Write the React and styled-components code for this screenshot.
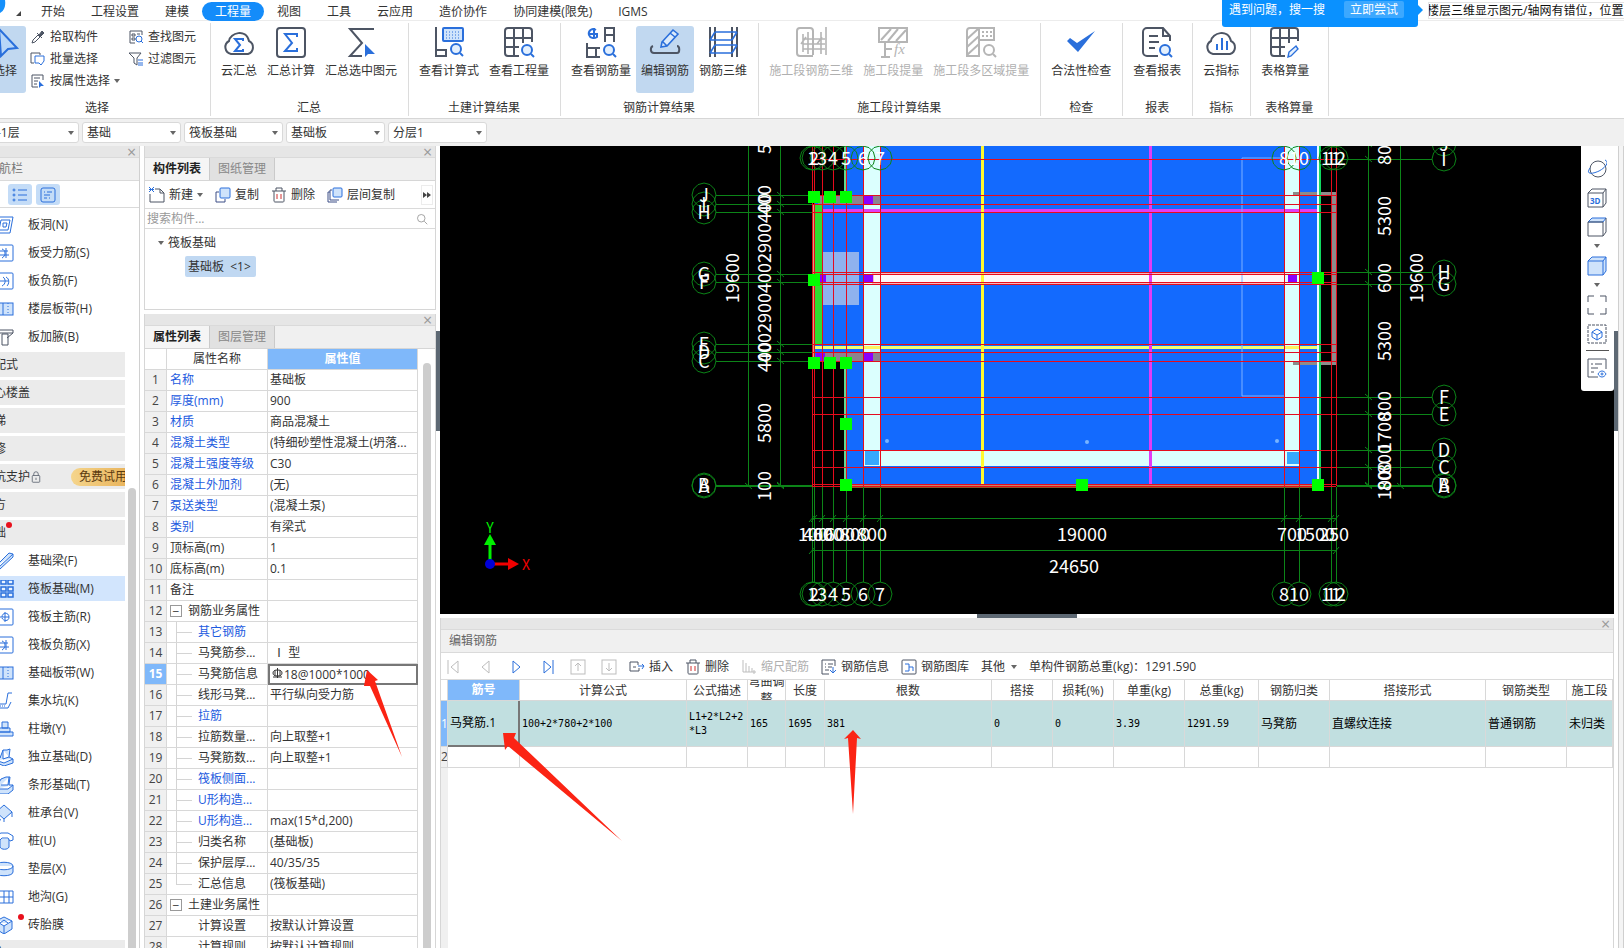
import React from 'react';
import styled, { createGlobalStyle, css } from 'styled-components';

const INK = '#4d5564';
const BLUE = '#2a6fdb';
const PALE = '#cfe3fb';

/* ---------- data ---------- */

const menus = ['开始', '工程设置', '建模', '工程量', '视图', '工具', '云应用', '造价协作', '协同建模(限免)', 'IGMS'];

const groups = [
  { title: '汇总', items: [['cloudSum', '云汇总'], ['sum', '汇总计算'], ['sumPick', '汇总选中图元']] },
  { title: '土建计算结果', items: [['formula', '查看计算式'], ['gridSearch', '查看工程量']] },
  { title: '钢筋计算结果', items: [['rebarSearch', '查看钢筋量'], ['rebarEdit', '编辑钢筋', true], ['rebar3d', '钢筋三维']] },
  { title: '施工段计算结果', disabled: true, items: [['zone3d', '施工段钢筋三维'], ['zoneFx', '施工段提量'], ['zoneMulti', '施工段多区域提量']] },
  { title: '检查', items: [['check', '合法性检查']] },
  { title: '报表', items: [['report', '查看报表']] },
  { title: '指标', items: [['cloudBars', '云指标']] },
  { title: '表格算量', wide: true, items: [['gridEdit', '表格算量']] },
];

const filters = [['楼层', '第-1层'], ['类别', '基础'], ['构件类型', '筏板基础'], ['构件', '基础板'], ['分层', '分层1']];

const navRows = [
  { icon: 'hole', text: '板洞(N)' },
  { icon: 'bars', text: '板受力筋(S)' },
  { icon: 'bars2', text: '板负筋(F)' },
  { icon: 'strip', text: '楼层板带(H)' },
  { icon: 'haunch', text: '板加腋(B)' },
  { head: true, text: '装配式' },
  { head: true, text: '空心楼盖' },
  { head: true, text: '楼梯' },
  { head: true, text: '装修' },
  { head: true, text: '基坑支护', trial: true },
  { head: true, text: '土方' },
  { head: true, text: '基础', dot: true },
  { icon: 'beam', text: '基础梁(F)' },
  { icon: 'raft', text: '筏板基础(M)', active: true },
  { icon: 'mainBar', text: '筏板主筋(R)' },
  { icon: 'bars', text: '筏板负筋(X)' },
  { icon: 'strip', text: '基础板带(W)' },
  { icon: 'sump', text: '集水坑(K)' },
  { icon: 'pier', text: '柱墩(Y)' },
  { icon: 'pad', text: '独立基础(D)' },
  { icon: 'padStrip', text: '条形基础(T)' },
  { icon: 'cap', text: '桩承台(V)' },
  { icon: 'pile', text: '桩(U)' },
  { icon: 'cushion', text: '垫层(X)' },
  { icon: 'trench', text: '地沟(G)' },
  { icon: 'brick', text: '砖胎膜', dot: true },
  { head: true, text: '其它' },
];

const props = [
  ['名称', '基础板', 'link'],
  ['厚度(mm)', '900', 'link'],
  ['材质', '商品混凝土', 'link'],
  ['混凝土类型', '(特细砂塑性混凝土(坍落...', 'link'],
  ['混凝土强度等级', 'C30', 'link'],
  ['混凝土外加剂', '(无)', 'link'],
  ['泵送类型', '(混凝土泵)', 'link'],
  ['类别', '有梁式', 'link'],
  ['顶标高(m)', '1', ''],
  ['底标高(m)', '0.1', ''],
  ['备注', '', ''],
  ['钢筋业务属性', '', 'group'],
  ['其它钢筋', '', 'child link'],
  ['马凳筋参...', '\u00a0Ⅰ 型', 'child'],
  ['马凳筋信息', '18@1000*1000', 'child edit'],
  ['线形马凳...', '平行纵向受力筋', 'child'],
  ['拉筋', '', 'child link'],
  ['拉筋数量...', '向上取整+1', 'child'],
  ['马凳筋数...', '向上取整+1', 'child'],
  ['筏板侧面...', '', 'child link'],
  ['U形构造...', '', 'child link'],
  ['U形构造...', 'max(15*d,200)', 'child link'],
  ['归类名称', '(基础板)', 'child'],
  ['保护层厚...', '40/35/35', 'child'],
  ['汇总信息', '(筏板基础)', 'child last'],
  ['土建业务属性', '', 'group'],
  ['计算设置', '按默认计算设置', 'child bare'],
  ['计算规则', '按默认计算规则', 'child bare'],
];

const rebarCols = [
  ['筋号', 72, '马凳筋.1'],
  ['计算公式', 167, '100+2*780+2*100'],
  ['公式描述', 61, 'L1+2*L2+2*L3'],
  ['弯曲调整', 38, '165'],
  ['长度', 39, '1695'],
  ['根数', 167, '381'],
  ['搭接', 61, '0'],
  ['损耗(%)', 61, '0'],
  ['单重(kg)', 71, '3.39'],
  ['总重(kg)', 74, '1291.59'],
  ['钢筋归类', 71, '马凳筋'],
  ['搭接形式', 156, '直螺纹连接'],
  ['钢筋类型', 81, '普通钢筋'],
  ['施工段', 0, '未归类'],
];

/* ---------- icons ---------- */

const lens = (x, y, r = 5, c = BLUE) => (
  <g stroke={c}><circle cx={x} cy={y} r={r} fill="#e4f0fd" /><path d={`M${x + r - 1} ${y + r - 1}l3 3`} /></g>
);
const cloud = 'M8 28a7 7 0 0 1-2-13c1-8 17-13 20 0a7 7 0 0 1-1 13z';

const ribbonIcons = {
  cloudSum: <><path d={cloud} /><path d="M20 15v-2h-8l5 6-5 6h8v-2" stroke={BLUE} /></>,
  sum: <><rect x="2" y="2" width="28" height="29" rx="3" /><path d="M22 11V8H10l7 9-7 8h12v-3" stroke={BLUE} /></>,
  sumPick: <><path d="M29 3H5l12 14L5 30h12" /><path d="M20 18v13l3-3h7z" fill={BLUE} stroke="none" /></>,
  formula: <><path d="M3 1v29h10v-6H3" /><rect x="10" y="2" width="20" height="13" rx="1" stroke={BLUE} fill={PALE} /><path d="M13 6h14M13 9h14M13 12h14" stroke={BLUE} strokeDasharray="1 2" strokeWidth="1" />{lens(23, 23)}</>,
  gridSearch: <><path d="M16 30H5a3 3 0 0 1-3-3V5a3 3 0 0 1 3-3h21a3 3 0 0 1 3 3v11M2 12h27M2 21h14M11 2v28M20 2v15" />{lens(24, 24)}</>,
  rebarSearch: <><path d="M20 16V2h9v14M20 9h9M2 17v14h13M2 22h13M11 22v9" /><path d="M11 4C6 1 3 6 4 9s5 4 8 2V8H3M9 2v10" stroke={BLUE} />{lens(24, 24)}</>,
  rebarEdit: <><path d="M4 20c-3 1-3 7 1 7h23c3 0 3-7 0-7" /><path d="M13 16l11-12 5 4-11 12-6 1zM21 7l5 4M14 16l4 4" stroke={BLUE} fill="#dcebfb" strokeWidth="1.6" /></>,
  rebar3d: <><path d="M3 1v30M8 1v30M25 1v30M30 1v30" /><path d="M8 6h22M3 14h22M8 19h22M3 27h22M3 14l5-8M25 14l5-8M3 27l5-8M25 27l5-8" stroke={BLUE} strokeWidth="1.6" /></>,
  zone3d: <><path d="M18 30H5a3 3 0 0 1-3-3V5a3 3 0 0 1 3-3h10a3 3 0 0 1 3 3v24" /><path d="M8 8v18M13 6v22M26 6v22M31 1v28M8 13h22M8 23h22M8 18h22M6 18l5-7M22 18l5-7" strokeWidth="1.6" /></>,
  zoneFx: <><path d="M2 2h28v14H2zM4 14L14 3M11 15L21 3M19 15L29 4M8 16v15M4 31h9M8 23h7" /><text x="17" y="28" stroke="none" fill="#b5b5b5" fontFamily="Liberation Serif, serif" fontStyle="italic" fontSize="15">fx</text></>,
  zoneMulti: <><path d="M29 15V2H5a3 3 0 0 0-3 3v25h12V2M14 14h15M2 13l11-10M2 21l12-11M2 29l12-11" /><path d="M17 6h10M17 10h10" strokeDasharray="2 2" />{lens(24, 24, 5, '#b5b5b5')}</>,
  check: <path d="M2 15l3-3 7 5L30 5 13 26z" fill={BLUE} stroke="none" />,
  report: <><path d="M17 30H6a4 4 0 0 1-4-4V6a4 4 0 0 1 4-4h16l7 8v5M22 2v8h7M8 10h9M8 16h10M8 22h6" />{lens(24, 24)}</>,
  cloudBars: <><path d={cloud} /><path d="M12 24v-6M17 24V12M22 24v-9" stroke={BLUE} /></>,
  gridEdit: <><path d="M16 30H5a3 3 0 0 1-3-3V5a3 3 0 0 1 3-3h21a3 3 0 0 1 3 3v10M2 12h27M2 21h14M11 2v28M20 2v15" /><path d="M19 31l1-5 7-6 2 3-7 7z" stroke={BLUE} strokeWidth="1.4" fill="#e4f0fd" /></>,
};

const smallIcons = {
  pick: <><path d="M2 14l1-3 5-5 2 2-5 5zM7 4l5 5" /><path d="M9 6l3-4 2 2-4 4z" fill={INK} /></>,
  batch: <><path d="M4 12H1V2h9v2" /><path d="M5 5h9v5l-3 4-2-2H5z" stroke={BLUE} /></>,
  byProp: <><path d="M13 7V2H2v12h6M4 5h6M4 8h4M4 11h3" /><path d="M9 8v7l2-2h3z" fill={BLUE} stroke="none" /></>,
  find: <><path d="M7 14H2V2h12v4M4 5h3v2H4zM4 9h3v2H4zM9 5h3" /><g stroke={BLUE}><circle cx="11" cy="10" r="3" /><path d="M13 12l2 2" /></g></>,
  filter: <><path d="M1 2h12L9 7v7l-3-2V7z" /><path d="M10 9h5M10 12h5M10 14h5" stroke={BLUE} /></>,
  list: <g stroke={BLUE}><path d="M6 3h9M6 8h9M6 13h9" /><circle cx="2" cy="3" r="1" /><circle cx="2" cy="8" r="1" /><circle cx="2" cy="13" r="1" /></g>,
  card: <g stroke={BLUE}><rect x="1" y="1" width="14" height="14" rx="2" /><path d="M4 5h1M7 5h5M4 8h6M4 11h3M9 11h1" /></g>,
  create: <><path d="M6 2h5l4 4v9H1V7M11 2v4h4" /><path d="M0 0l5 5M5 0L0 5M0 2.500h5" stroke={BLUE} /></>,
  copy: <g stroke={BLUE}><path d="M4 5H1v10h9v-3" stroke="#3d4f87" /><rect x="5" y="1" width="10" height="10" rx="1" fill={PALE} /></g>,
  trash: <><path d="M1 4h14M5 4V1h6v3M3 4v10c0 1 1 1 1 1h8c1 0 1-1 1-1V4" /><path d="M6 7v5M10 7v5" stroke="#d03030" /></>,
  copyFloor: <g stroke={BLUE}><path d="M3 5H1v10h9M5 3H3v10h9" stroke="#3d4f87" /><rect x="6" y="1" width="9" height="9" rx="1" fill={PALE} /></g>,
  search: <><circle cx="7" cy="7" r="5" /><path d="M11 11l4 4" /></>,
  lock: <><rect x="3" y="6" width="10" height="9" rx="1" /><path d="M5 6V4a3 3 0 0 1 6 0v2M8 9v3" /></>,
  first: <path d="M2 1v14M12 2v12L5 8z" />,
  prev: <path d="M12 2v12L5 8z" />,
  next: <path d="M5 2v12l7-6z" stroke={BLUE} />,
  last: <path d="M14 1v14M5 2v12l7-6z" stroke={BLUE} />,
  up: <><rect x="1" y="1" width="14" height="14" /><path d="M8 12V4M5 7l3-3 3 3" /></>,
  down: <><rect x="1" y="1" width="14" height="14" /><path d="M8 4v8M5 9l3 3 3-3" /></>,
  insert: <><path d="M9 3H1v9h9v-3M9 3v3M4 8h3" /><path d="M9 7h6M13 5l2 2-2 3" stroke={BLUE} /></>,
  scale: <path d="M2 1v12h13M5 4v9M8 7v6M11 9v4M13 11v4" />,
  info: <><path d="M8 15H1V1h13v6M4 5h1M7 5h5M4 8h1M7 8h4M4 11h4" /><path d="M12 8v6M9 11l3 3 3-3" stroke={BLUE} /></>,
  library: <><rect x="1" y="1" width="14" height="14" rx="1" /><path d="M4 5h4v7M8 8h4v4M4 12h4" stroke={BLUE} /></>,
};

const navIcons = {
  hole: <><path d="M4 1h15l-3 16H1z" /><path d="M7 4h9l-2 10H5zM9 7h4l-1 4H9z" /></>,
  bars: <><rect x="1" y="1" width="18" height="16" rx="1" /><path d="M4 7h10M4 11h11M8 5c4 1 4 7 0 9M12 4v10" /></>,
  bars2: <><rect x="1" y="1" width="18" height="16" rx="1" /><path d="M4 9h11M9 5c3 2 3 7-1 9M12 5c4 2 3 7 1 9" /></>,
  strip: <><rect x="1" y="3" width="18" height="12" fill={PALE} /><path d="M9 3v12" /><path d="M14 3v12" strokeDasharray="1 2" /></>,
  haunch: <path d="M1 2h18M1 5h18M19 2v3l-6 5M8 17V6h6v11z" stroke={INK} />,
  beam: <path d="M1 15L15 1l4 1v3L6 17H1zM1 15h4L19 2" fill={PALE} />,
  raft: <path d="M0 0h5v4H0zM7 0h5v4H7zM14 0h5v4h-5zM0 7h5v4H0zM7 7h5v4H7zM14 7h5v4h-5zM0 13h5v4H0zM7 13h5v4H7zM14 13h5v4h-5z" fill="#eaf3fe" strokeWidth="1.5" />,
  mainBar: <><rect x="1" y="1" width="18" height="16" rx="1" /><path d="M4 9h11M8 9c0-5 7-5 7 0s-6 4-7 1M11 4v10" /></>,
  sump: <><path d="M18 1h-4l-2 11H2M2 16h12l3-6" /><path d="M2 14h10" strokeDasharray="1 1" /></>,
  pier: <path d="M8 2h6v6H8zM5 8h11v4H5zM1 12h18v4H1z" fill={PALE} />,
  pad: <path d="M6 10l3-8h4l3-1-1 8 4 2v4l-9 3-9-4v-3l5-2zM9 2v9l6-2M1 12l9 3 9-4" fill={PALE} />,
  padStrip: <path d="M3 10l4-7 5-2h4l-1 8h4v5l-5 4H1v-5h2zM7 9h7l1-8M1 13h13l5-4" fill={PALE} />,
  cap: <path d="M2 8l8-7 8 7-8 7zM18 8v5M10 15v3M4 10v5l3 1" fill={PALE} />,
  pile: <><path d="M6 7v8c1 3 8 3 9 0V7" fill={PALE} /><path d="M1 4l6-3h7l5 3v4l-3 1-2-3H8L5 9 1 7z" fill="#fff" /></>,
  cushion: <path d="M1 6c0-5 18-5 18 0v6c0 5-18 5-18 0zM1 6c0 5 18 5 18 0" fill={PALE} />,
  trench: <path d="M1 3h18v12H1zM1 9h18M5 3v12M10 3v12M15 3v12" />,
  brick: <path d="M2 5l8-4 8 4v8l-8 5-8-5zM2 5l8 5 8-5M10 10v8M6 7l4-3 4 3" fill={PALE} />,
};

const viewIcons = {
  orbit: <><circle cx="11" cy="10" r="8" /><path d="M3 9c-5 7 3 6 9 3s11-9 6-11" stroke={BLUE} /></>,
  cube3d: <><path d="M1 5h15v14H1zM1 5l4-4h14v14l-3 4M16 5l3-4" /><text x="3" y="16" fontSize="8" fontWeight="700" fill={BLUE} stroke="none" fontFamily="Open Sans, sans-serif">3D</text></>,
  cubeTop: <><path d="M1 5l4-4h14l-3 4z" fill={PALE} stroke={BLUE} /><path d="M1 5h15v14H1zM19 1v14l-3 4" /></>,
  cubeFull: <path d="M1 5l4-4h14v14l-3 4H1zM1 5h15v14M16 5l3-4" fill={PALE} stroke={BLUE} />,
  frame: <path d="M1 7V1h6M13 1h6v6M19 13v6h-6M7 19H1v-6" />,
  region: <><rect x="1" y="1" width="18" height="18" strokeDasharray="3 1" /><path d="M5 8l5-3 5 3v5l-5 3-5-3zM5 8l5 3 5-3M10 11v5" stroke={BLUE} /></>,
  display: <><path d="M11 19H1V1h18v10M4 6h2M8 6h7M4 10h7M4 14h3" /><path d="M11 16c2-4 6-4 8 0-2 4-6 4-8 0z" stroke={BLUE} /><circle cx="15" cy="16" r="1" stroke={BLUE} /></>,
};

const RibbonIcon = ({ name, disabled }) => (
  <Svg $w={32} viewBox="0 0 32 32" $ink={INK} $thick className={disabled ? 'off' : ''}>{ribbonIcons[name]}</Svg>
);
const Small = ({ name, size = 16, ink = INK }) => <Svg $w={size} viewBox="0 0 16 16" $ink={ink}>{smallIcons[name]}</Svg>;
const Caret = () => <CaretSvg viewBox="0 0 6 4"><path d="M0 0h6L3 4z" /></CaretSvg>;

/* ---------- plan view ---------- */

const leftX = [812, 814, 822, 833, 846, 863, 880];
const rightX = [1284, 1299, 1331, 1336];
const axesX = [...leftX, ...rightX];
const xNames = ['1', '2', '3', '4', '5', '6', '7', '8', '10', '11', '12'];
const leftY = [['J', 195], ['I', 204], ['H', 212], ['G', 274], ['F', 282], ['E', 344], ['D', 352], ['C', 361], ['B', 485], ['A', 486]];
const rightY = [['J', 144], ['I', 159], ['H', 272], ['G', 284], ['F', 397], ['E', 414], ['D', 450], ['C', 467], ['B', 485], ['A', 486]];
const redY = [159, 195, 204, 212, 272, 274, 282, 284, 344, 352, 361, 397, 414, 450, 467, 484, 486];
const dimsLeft = [['5300', 134], ['400', 200], ['400', 208], ['2900', 243], ['400', 278], ['2900', 313], ['400', 348], ['400', 357], ['5800', 423], ['100', 486]];
const dimsRight = [['800', 150], ['5300', 216], ['600', 278], ['5300', 341], ['800', 406], ['1700', 432], ['800', 459], ['800', 476], ['100', 485]];
const dimsBottom = [['100', 813], ['400', 818], ['600', 828], ['600', 840], ['800', 855], ['800', 872], ['19000', 1082], ['700', 1292], ['1500', 1315], ['250', 1334]];
const grips = [[814, 197], [830, 197], [846, 197], [814, 280], [814, 363], [830, 363], [846, 363], [846, 424], [846, 485], [1082, 485], [1318, 278], [1318, 485]];
const columns = [[864, 196], [864, 275], [816, 353], [864, 353], [1288, 275], [817, 275]];

const octagon = (cx, cy) =>
  Array.from({ length: 12 }, (_, i) => {
    const a = (i * Math.PI) / 6;
    return `${(cx + 12 * Math.cos(a)).toFixed(1)},${(cy + 12 * Math.sin(a)).toFixed(1)}`;
  }).join(' ');

const Plan = () => (
  <PlanSvg viewBox="440 146 1174 468" preserveAspectRatio="xMinYMin slice">
    <rect x="846" y="140" width="474" height="347" fill="#136afe" />
    <rect x="814" y="195" width="34" height="166" fill="#136afe" />
    <rect x="815" y="205" width="7" height="140" fill="#30dd30" />
    <rect x="812" y="205" width="3" height="156" fill="#d9a07c" />
    <path d="M818 196h62v8h-62zM818 353h62v8h-62z" fill="#8b8390" />
    <rect x="823" y="252" width="36" height="53" fill="#8fb2ee" />
    <path d="M844 140h2v55h-2zM844 361h2v124h-2z" fill="#62d890" />
    <path d="M846 140h1v55h-1zM846 361h1v124h-1z" fill="#c9c4d8" />
    <rect x="815" y="346" width="505" height="3" fill="#eeff72" />
    <rect x="822" y="209" width="495" height="3" fill="#e23cf5" />
    <path d="M864 140h16v326h-16zM1285 140h14v326h-14zM864 451h435v15H864z" fill="#dbfffe" />
    <path d="M864 196h16v8h-16zM864 353h16v8h-16z" fill="#8b8390" />
    <path d="M1293 192h43v173h-43v-4h38V196h-38z" fill="#8c8c8c" />
    <path d="M864 209h16v3h-16zM1285 209h14v3h-14z" fill="#e23cf5" />
    <path d="M864 346h16v3h-16zM1285 346h14v3h-14z" fill="#fff45c" />
    <rect x="872" y="273" width="412" height="12" fill="#f6b8bd" />
    <rect x="874" y="275" width="410" height="8" fill="#fbf8f9" />
    <rect x="981" y="140" width="3" height="345" fill="#fff930" />
    <rect x="1149" y="140" width="3" height="345" fill="#e23cf5" />
    <path d="M1284 158h-42v238h42" fill="none" stroke="#7fb0ff" />
    <path d="M1317 140h2v345h-2z" fill="#eafcff" />
    <path d="M1319 140h2v345h-2z" fill="#10d860" />
    <path d="M865 451h14v14h-14zM1287 452h12v12h-12z" fill="#36a8fe" />
    <rect x="846" y="485" width="474" height="3" fill="#8c5a2b" />
    <path d="M846 485h474" stroke="#ffb0a0" />
    <g fill="#78b4ff"><circle cx="887" cy="441" r="2" /><circle cx="1087" cy="442" r="2" /><circle cx="1277" cy="441" r="2" /></g>
    <g fill="#8a00ff">{columns.map(([x, y]) => <rect key={`${x}${y}`} x={x} y={y} width="9" height="8" />)}</g>

    <g stroke="#e60c1c" shapeRendering="crispEdges">
      {axesX.map((x) => <path key={x} d={`M${x} 146V486`} />)}
      {redY.map((y) => <path key={y} d={`M812 ${y}H1336`} />)}
    </g>

    <g stroke="#0c8418" fill="none">
      <g shapeRendering="crispEdges">
        {axesX.map((x) => <path key={x} d={`M${x} 487V582`} />)}
        {leftY.map(([n, y]) => <path key={n} d={`M716 ${y}H812`} />)}
        {rightY.map(([n, y]) => <path key={n} d={`M1337 ${y}H1432`} />)}
        <path d="M748 140V486M780 140V486M1368 140V486M1400 140V486M812 518H1336M812 550H1336" />
      </g>
      {axesX.map((x) => <path key={x} d={`M${x - 3} 522l6-7`} />)}
      {leftY.map(([n, y]) => <path key={n} d={`M777 ${y - 3}l7 6`} />)}
      {rightY.map(([n, y]) => <path key={n} d={`M1365 ${y - 3}l7 6`} />)}
      <path d="M809 554l6-7M1333 554l6-7M745 483l7 6M1397 483l7 6" />
      {axesX.map((x) => <polygon key={x} points={octagon(x, 594)} />)}
      {axesX.map((x) => <polygon key={x} points={octagon(x, 158)} />)}
      {leftY.map(([n, y]) => <polygon key={n} points={octagon(704, y)} />)}
      {rightY.map(([n, y]) => <polygon key={n} points={octagon(1444, y)} />)}
    </g>

    <g fill="#00ff00">{grips.map(([x, y]) => <rect key={`${x}${y}`} x={x - 6} y={y - 6} width="12" height="12" />)}</g>

    <PlanText>
      {axesX.map((x, i) => <text key={x} x={x} y="601">{xNames[i]}</text>)}
      {axesX.map((x, i) => <text key={x} x={x} y="165">{xNames[i]}</text>)}
      {leftY.map(([n, y]) => <text key={n} x="704" y={y + 7}>{n}</text>)}
      {rightY.map(([n, y]) => <text key={n} x="1444" y={y + 7}>{n}</text>)}
      {dimsBottom.map(([t, x]) => <text key={x} x={x} y="541">{t}</text>)}
      <text x="1074" y="573">24650</text>
      {dimsLeft.map(([t, y]) => <text key={y} transform={`translate(771 ${y}) rotate(-90)`}>{t}</text>)}
      {dimsRight.map(([t, y]) => <text key={y} transform={`translate(1391 ${y}) rotate(-90)`}>{t}</text>)}
      <text transform="translate(739 278) rotate(-90)">19600</text>
      <text transform="translate(1423 278) rotate(-90)">19600</text>
    </PlanText>

    <path d="M490 564V543" stroke="#00f000" strokeWidth="3" />
    <path d="M484 545l6-11 6 11z" fill="#00f000" />
    <path d="M490 564h20" stroke="#f00000" strokeWidth="3" />
    <path d="M508 558l11 6-11 6z" fill="#f00000" />
    <circle cx="490" cy="564" r="5" fill="#0000d8" />
    <PlanText>
      <text x="490" y="533" fill="#00f000" className="axis">Y</text>
      <text x="526" y="570" fill="#f00000" className="axis">X</text>
    </PlanText>
  </PlanSvg>
);

/* ---------- panels ---------- */

const Ribbon = () => (
  <RibbonBar>
    <Group $first>
      <GroupItems>
        <BigButton $active $select>
          <Svg $w={32} viewBox="0 0 32 32" $ink={BLUE} $thick><path d="M10 3l18 19-9 1-7 7z" fill="#b8d6f8" /></Svg>
          <span>选择</span>
        </BigButton>
        <PickGrid>
          <MiniButton><Small name="pick" />拾取构件</MiniButton>
          <MiniButton><Small name="find" />查找图元</MiniButton>
          <MiniButton><Small name="batch" />批量选择</MiniButton>
          <MiniButton><Small name="filter" />过滤图元</MiniButton>
          <MiniButton><Small name="byProp" />按属性选择<Caret /></MiniButton>
        </PickGrid>
      </GroupItems>
      <GroupTitle>选择</GroupTitle>
    </Group>
    {groups.map((g) => (
      <Group key={g.title} $wide={g.wide}>
        <GroupItems>
          {g.items.map(([icon, label, active]) => (
            <BigButton key={label} $active={active} disabled={g.disabled}>
              <RibbonIcon name={icon} disabled={g.disabled} />
              <span>{label}</span>
            </BigButton>
          ))}
        </GroupItems>
        <GroupTitle>{g.title}</GroupTitle>
      </Group>
    ))}
  </RibbonBar>
);

const Grip = () => <GripBar><CloseButton aria-label="关闭">×</CloseButton></GripBar>;

const Navigator = () => (
  <NavPanel>
    <Grip />
    <NavTitle>模块导航栏</NavTitle>
    <NavModes>
      <ModeButton aria-label="列表"><Small name="list" /></ModeButton>
      <ModeButton aria-label="卡片"><Small name="card" /></ModeButton>
    </NavModes>
    <NavBody>
      <NavList>
        {navRows.map((r) => (
          <NavRow key={r.text} $head={r.head} $active={r.active}>
            {r.icon && <Svg $w={20} $h={18} viewBox="0 0 20 18" $ink={BLUE}>{navIcons[r.icon]}</Svg>}
            <NavLabel $dot={r.dot} $before={r.icon}>{r.text}</NavLabel>
            {r.trial && <><Small name="lock" size={12} /><Trial>免费试用</Trial></>}
          </NavRow>
        ))}
      </NavList>
      <Thumb $top={280} />
    </NavBody>
  </NavPanel>
);

const PropertyRow = ({ index, row }) => {
  const [name, value, kind] = row;
  const editing = kind.includes('edit');
  return (
    <tr>
      <IndexCell $active={editing}>{index}</IndexCell>
      <NameCell $link={kind.includes('link')}>
        <div>
          {kind === 'group' && <Fold aria-label="折叠">−</Fold>}
          {kind.includes('child') && <Branch $last={kind.includes('last')} $bare={kind.includes('bare')} />}
          {name}
        </div>
      </NameCell>
      {editing ? (
        <EditCell>
          <div>
            <Svg $w={11} $h={14} viewBox="0 0 11 14" $ink="#333"><path d="M5.500 0v10M3 2v6M8 2v6M1 9h9" /><ellipse cx="5.500" cy="5" rx="4.500" ry="3" /></Svg>
            <input aria-label={name} defaultValue={value} />
          </div>
        </EditCell>
      ) : <td>{value}</td>}
    </tr>
  );
};

const SidePanels = () => (
  <SideColumn>
    <Panel>
      <Grip />
      <Tabs><Tab $active>构件列表</Tab><Tab>图纸管理</Tab></Tabs>
      <Tools>
        <MiniButton><Small name="create" />新建<Caret /></MiniButton>
        <MiniButton><Small name="copy" />复制</MiniButton>
        <MiniButton><Small name="trash" />删除</MiniButton>
        <MiniButton><Small name="copyFloor" />层间复制</MiniButton>
        <MoreButton aria-label="更多"><svg viewBox="0 0 8 6"><path d="M0 0l4 3-4 3zM4 0l4 3-4 3z" /></svg></MoreButton>
      </Tools>
      <SearchRow><input aria-label="搜索构件" placeholder="搜索构件..." /><Small name="search" size={12} ink="#888" /></SearchRow>
      <Tree>
        <TreeRoot><Caret />筏板基础</TreeRoot>
        <TreeItem>基础板&nbsp; &lt;1&gt;</TreeItem>
      </Tree>
    </Panel>
    <Panel $grow>
      <Grip />
      <Tabs><Tab $active>属性列表</Tab><Tab>图层管理</Tab></Tabs>
      <PropBody>
        <PropTable>
          <colgroup><col width="22" /><col width="101" /><col /></colgroup>
          <thead><tr><th /><th>属性名称</th><Marked>属性值</Marked></tr></thead>
          <tbody>{props.map((row, i) => <PropertyRow key={i} index={i + 1} row={row} />)}</tbody>
        </PropTable>
        <Thumb $top={14} />
      </PropBody>
    </Panel>
  </SideColumn>
);

const RebarEditor = () => (
  <Editor>
    <Grip />
    <EditorTitle>编辑钢筋</EditorTitle>
    <EditorTools>
      <Steps>
        {['first', 'prev', 'next', 'last', 'up', 'down'].map((n) => (
          <StepButton key={n} aria-label={n}><Small name={n} ink="#bdbdbd" /></StepButton>
        ))}
      </Steps>
      <MiniButton><Small name="insert" />插入</MiniButton>
      <MiniButton><Small name="trash" />删除</MiniButton>
      <MiniButton disabled><Small name="scale" ink="#bdbdbd" />缩尺配筋</MiniButton>
      <MiniButton><Small name="info" />钢筋信息</MiniButton>
      <MiniButton><Small name="library" />钢筋图库</MiniButton>
      <MiniButton>其他<Caret /></MiniButton>
      <span>单构件钢筋总重(kg)：1291.590</span>
    </EditorTools>
    <EditorBody>
      <RebarTable>
        <colgroup><col width="7" />{rebarCols.map(([n, w]) => <col key={n} width={w || undefined} />)}</colgroup>
        <thead>
          <tr><th />{rebarCols.map(([n], i) => (i === 0 ? <Marked key={n}>{n}</Marked> : <th key={n}><div>{n}</div></th>))}</tr>
        </thead>
        <tbody>
          <DataRow>
            <IndexCell $active>1</IndexCell>
            {rebarCols.map(([n, , v]) => <td key={n}>{v}</td>)}
          </DataRow>
          <tr><IndexCell>2</IndexCell>{rebarCols.map(([n]) => <td key={n} />)}</tr>
        </tbody>
      </RebarTable>
    </EditorBody>
  </Editor>
);

const App = () => (
  <Page>
    <GlobalStyle />
    <MenuBar>
      <Logo>
        <svg viewBox="0 0 28 20"><path d="M0 0h5c1 6-1 11-5 13z" fill="#1590fb" /><path d="M21 11v5h-5z" fill="#444" /></svg>
      </Logo>
      {menus.map((m) => <MenuItem key={m} $active={m === '工程量'}>{m}</MenuItem>)}
      <Help>
        <Tip>遇到问题，搜一搜<button>立即尝试</button></Tip>
        <HelpInput aria-label="搜索" defaultValue="楼层三维显示图元/轴网有错位，位置不对" />
      </Help>
    </MenuBar>
    <Ribbon />
    <FilterBar>
      {filters.map(([label, value]) => (
        <FilterBox key={label}>
          <select aria-label={label} defaultValue={value}><option>{value}</option></select>
          <Caret />
        </FilterBox>
      ))}
    </FilterBar>
    <Workspace>
      <Navigator />
      <SidePanels />
      <Splitter><i /></Splitter>
      <Main>
        <Viewport>
          <Plan />
          <ViewTools>
            {['orbit', 'cube3d', 'cubeTop', 'v1', 'cubeFull', 'v2', 'frame', 'region', 'line', 'display'].map((n) => {
              if (n === 'line') return <hr key={n} />;
              if (!viewIcons[n]) return <ViewCaret key={n}><Caret /></ViewCaret>;
              return <button key={n} aria-label={n}><Svg $w={20} viewBox="0 0 20 20" $ink={INK}>{viewIcons[n]}</Svg></button>;
            })}
          </ViewTools>
        </Viewport>
        <SplitterRow><i /></SplitterRow>
        <RebarEditor />
      </Main>
      <Splitter><i /></Splitter>
      <EdgePanel />
    </Workspace>
    <Marks viewBox="0 0 1624 948">
      <path d="M367 670l11 10-3 1 27 76-32-71-6 0z" />
      <path d="M503 733l13 0-2 5 108 103-114-95-3 4z" />
      <path d="M853 730l8 9-4-1-4 76-5-76-4 1z" />
    </Marks>
  </Page>
);

/* ---------- styles ---------- */

const GlobalStyle = createGlobalStyle`
  * { box-sizing: border-box; }
  body {
    margin: 0;
    color: #333;
    background: #fff;
    font: 12px/18px "Open Sans", "Noto Sans CJK SC", sans-serif;
  }
  button, input, select {
    margin: 0;
    padding: 0;
    border: 0;
    border-radius: 0;
    outline: 0;
    background: none;
    color: inherit;
    font: inherit;
    white-space: nowrap;
  }
  svg { display: block; flex: none; }
`;

const Page = styled.div`
  position: relative;
  display: flex;
  flex-direction: column;
  height: 100vh;
  overflow: hidden;
`;

const Svg = styled.svg`
  width: ${(p) => p.$w}px;
  height: ${(p) => p.$h || p.$w}px;
  fill: none;
  stroke: ${(p) => p.$ink};
  stroke-width: ${(p) => (p.$thick ? 2 : 1)};
  &.off, &.off * { stroke: #b5b5b5; }
  &.off text { stroke: none; }
  &.off circle { fill: #fff; }
`;

const CaretSvg = styled.svg`
  width: 6px;
  height: 4px;
  fill: #666;
`;

const MenuBar = styled.header`
  display: flex;
  height: 21px;
  border-bottom: 1px solid #ececec;
`;

const Logo = styled.div`
  width: 28px;
  svg { width: 28px; height: 20px; }
`;

const MenuItem = styled.button`
  height: 19px;
  margin-top: 2px;
  padding: 0 13px;
  ${(p) => p.$active && css`
    background: #148cfa;
    border-radius: 10px;
    color: #fff;
  `}
`;

const Help = styled.div`
  display: flex;
  width: 402px;
  margin-left: auto;
`;

const Tip = styled.div`
  position: relative;
  z-index: 2;
  display: flex;
  align-items: flex-start;
  justify-content: space-between;
  width: 196px;
  height: 27px;
  padding: 1px 14px 0 7px;
  border-radius: 0 0 3px 3px;
  background: #0a91ff;
  color: #fff;
  button {
    height: 17px;
    padding: 0 6px;
    border-radius: 2px;
    background: #3ca8ff;
  }
  &::after {
    content: '';
    position: absolute;
    left: 100%;
    top: 5px;
    border: 5px solid transparent;
    border-left-color: #0a91ff;
    border-right: 0;
  }
`;

const HelpInput = styled.input`
  flex: 1;
  min-width: 0;
  height: 17px;
  margin: 2px 0 0 10px;
  border: 1px solid #e4e4e4;
  border-right: 0;
  color: #111;
  text-indent: -2px;
`;

const RibbonBar = styled.div`
  display: flex;
  flex: none;
  height: 98px;
  padding-top: 2px;
  border-bottom: 1px solid #d6d6d6;
`;

const Group = styled.section`
  display: flex;
  flex-direction: column;
  height: 93px;
  padding: 3px 6px 0 5px;
  border-right: 1px solid #dcdcdc;
  ${(p) => p.$first && css`
    width: 227px;
    margin-left: -16px;
    padding: 3px 0 0;
  `}
  ${(p) => p.$wide && css`min-width: 78px;`}
`;

const GroupItems = styled.div`
  display: flex;
`;

const GroupTitle = styled.div`
  margin-top: 6px;
  text-align: center;
`;

const BigButton = styled.button`
  display: flex;
  flex-direction: column;
  align-items: center;
  gap: 4px;
  height: 67px;
  padding: 0 5px;
  border-radius: 3px;
  ${(p) => p.$select && css`width: 42px;`}
  ${(p) => p.$active && css`background: #c1d8f0;`}
  &:disabled { color: #b0b0b0; }
`;

const PickGrid = styled.div`
  display: grid;
  grid-template-columns: 98px auto;
  grid-template-rows: 21px 23px 22px;
  align-items: center;
  align-content: start;
  padding-left: 4px;
`;

const MiniButton = styled.button`
  display: flex;
  align-items: center;
  gap: 4px;
  height: 20px;
  &:disabled { color: #b0b0b0; }
`;

const FilterBar = styled.div`
  display: flex;
  flex: none;
  gap: 3px;
  height: 27px;
  margin-left: -20px;
  padding-top: 3px;
  background: #f0f0f0;
`;

const FilterBox = styled.div`
  position: relative;
  width: 99px;
  height: 21px;
  border: 1px solid #d9d9d9;
  border-radius: 3px;
  background: #fff;
  select {
    width: 100%;
    height: 19px;
    padding-left: 4px;
    appearance: none;
  }
  svg {
    position: absolute;
    right: 4px;
    top: 8px;
    pointer-events: none;
  }
`;

const Workspace = styled.div`
  display: flex;
  flex: 1;
  min-height: 0;
`;

const GripBar = styled.div`
  display: flex;
  flex: none;
  justify-content: flex-end;
  height: 12px;
  border-bottom: 1px solid #dadada;
  background: #e6e6e6;
`;

const CloseButton = styled.button`
  width: 15px;
  color: #999;
  font-size: 16px;
  line-height: 12px;
`;

const NavPanel = styled.nav`
  display: flex;
  flex: none;
  flex-direction: column;
  width: 180px;
  margin-left: -40px;
  border-right: 1px solid #d0d0d0;
`;

const NavTitle = styled.div`
  flex: none;
  height: 22px;
  padding: 2px 3px;
  background: #f0f0f0;
  color: #777;
`;

const NavModes = styled.div`
  display: flex;
  flex: none;
  gap: 4px;
  height: 28px;
  padding: 3px 0 0 48px;
  border-top: 1px solid #dadada;
  border-bottom: 1px solid #dadada;
`;

const ModeButton = styled.button`
  display: grid;
  place-items: center;
  width: 24px;
  height: 21px;
  border-radius: 3px;
  background: #c4dcf7;
`;

const NavBody = styled.div`
  display: flex;
  flex: 1;
  gap: 3px;
  min-height: 0;
  padding-right: 3px;
`;

const NavList = styled.div`
  display: flex;
  flex: 1;
  flex-direction: column;
  gap: 3px;
  min-width: 0;
  padding-top: 4px;
  overflow: hidden;
`;

const NavRow = styled.button`
  display: flex;
  flex: none;
  align-items: center;
  gap: ${(p) => (p.$head ? 0 : 14)}px;
  height: 25px;
  padding-left: ${(p) => (p.$head ? 22 : 34)}px;
  background: ${(p) => (p.$active ? '#d2e5fd' : p.$head ? '#ebebeb' : '#fff')};
  text-align: left;
`;

const NavLabel = styled.span`
  position: relative;
  ${(p) => p.$dot && css`
    &::after {
      content: '';
      position: absolute;
      top: -2px;
      ${p.$before ? 'left: -10px;' : 'right: -6px;'}
      width: 6px;
      height: 6px;
      border-radius: 50%;
      background: #e8101c;
    }
  `}
`;

const Trial = styled.span`
  margin-left: auto;
  margin-right: -2px;
  padding-left: 8px;
  border-radius: 9px 0 0 9px;
  background: linear-gradient(90deg, #f5d58c, #e9b45c);
  color: #5a3a10;
`;

const Thumb = styled.div`
  flex: none;
  width: 8px;
  margin-top: ${(p) => p.$top}px;
  border-radius: 4px 4px 0 0;
  background: #cdcdcd;
`;

const SideColumn = styled.div`
  display: flex;
  flex: none;
  flex-direction: column;
  gap: 4px;
  width: 292px;
  margin-left: 4px;
`;

const Panel = styled.section`
  display: flex;
  flex-direction: column;
  border: 1px solid #d6d6d6;
  border-top: 0;
  ${(p) => p.$grow && css`
    flex: 1;
    min-height: 0;
    border-bottom: 0;
  `}
`;

const Tabs = styled.div`
  display: flex;
  flex: none;
  height: 23px;
  border-bottom: 1px solid #d6d6d6;
  background: #f0f0f0;
`;

const Tab = styled.button`
  padding: 0 8px;
  border-right: 1px solid #cacaca;
  background: ${(p) => (p.$active ? '#f5f5f5' : '#e1e1e1')};
  color: ${(p) => (p.$active ? '#222' : '#888')};
  font-weight: ${(p) => (p.$active ? 700 : 400)};
`;

const Tools = styled.div`
  display: flex;
  align-items: center;
  gap: 12px;
  height: 28px;
  padding: 0 2px 0 4px;
  border-bottom: 1px solid #dadada;
`;

const MoreButton = styled.button`
  display: grid;
  place-items: center;
  width: 12px;
  height: 20px;
  margin-left: auto;
  border: 1px solid #ececec;
  svg { width: 8px; height: 6px; fill: #444; }
`;

const SearchRow = styled.div`
  display: flex;
  align-items: center;
  height: 20px;
  padding: 0 7px 0 2px;
  border-bottom: 1px solid #dadada;
  input { flex: 1; min-width: 0; }
  input::placeholder { color: #999; }
`;

const Tree = styled.div`
  display: flex;
  flex-direction: column;
  align-items: flex-start;
  gap: 4px;
  height: 80px;
  padding: 5px 0 0 13px;
`;

const TreeRoot = styled.div`
  display: flex;
  align-items: center;
  gap: 4px;
`;

const TreeItem = styled.button`
  height: 21px;
  margin-left: 27px;
  padding: 0 5px 0 3px;
  border-radius: 2px;
  background: #c0d8f2;
`;

const PropBody = styled.div`
  display: flex;
  flex: 1;
  gap: 5px;
  min-height: 0;
  padding-right: 4px;
  overflow: hidden;
`;

const gridTable = css`
  width: 100%;
  border-collapse: separate;
  border-spacing: 0;
  table-layout: fixed;
  th, td {
    height: 21px;
    padding: 0;
    border: solid #d8d8d8;
    border-width: 0 1px 1px 0;
    font-weight: 400;
    overflow: hidden;
    white-space: nowrap;
  }
  td { padding-left: 2px; }
`;

const PropTable = styled.table`
  ${gridTable}
  flex: 1;
  align-self: flex-start;
  min-width: 0;
  td { line-height: 20px; }
`;

const Marked = styled.th`
  background: #7fb8fa;
  color: #fff;
  && { font-weight: 700; }
`;

const IndexCell = styled.td`
  && {
    padding: 0;
    background: ${(p) => (p.$active ? '#7fb8fa' : '#f0f0f0')};
    color: ${(p) => (p.$active ? '#fff' : '#444')};
    font-weight: ${(p) => (p.$active ? 700 : 400)};
    text-align: center;
  }
`;

const NameCell = styled.td`
  color: ${(p) => (p.$link ? '#1d5be0' : '#333')};
  && { padding-left: 3px; }
  div { display: flex; align-items: center; height: 20px; }
`;

const Fold = styled.button`
  width: 12px;
  height: 12px;
  margin-right: 6px;
  border: 1px solid #999;
  line-height: 9px;
`;

const Branch = styled.span`
  flex: none;
  width: 16px;
  height: 20px;
  margin: 0 6px;
  ${(p) => !p.$bare && css`
    background:
      linear-gradient(#d4d4d4, #d4d4d4) 0 0 / 1px ${p.$last ? '50%' : '100%'} no-repeat,
      linear-gradient(#d4d4d4, #d4d4d4) 0 10px / 16px 1px no-repeat;
  `}
`;

const EditCell = styled.td`
  && {
    padding-left: 2px;
    border: 2px solid #777;
  }
  div { display: flex; align-items: center; gap: 1px; height: 17px; }
  input { width: 100%; height: 16px; line-height: 16px; }
`;

const Splitter = styled.div`
  flex: none;
  width: 4px;
  padding-top: 185px;
  i {
    display: block;
    height: 100px;
    background: #5d6873;
  }
`;

const SplitterRow = styled.div`
  flex: none;
  height: 4px;
  i {
    display: block;
    width: 100px;
    height: 4px;
    margin: 0 auto;
    background: #5d6873;
  }
`;

const Main = styled.main`
  display: flex;
  flex: 1;
  flex-direction: column;
  min-width: 0;
`;

const Viewport = styled.div`
  position: relative;
  flex: 468;
  min-height: 0;
  overflow: hidden;
  background: #000;
`;

const PlanSvg = styled.svg`
  width: 100%;
  height: 100%;
`;

const PlanText = styled.g`
  fill: #fff;
  font-family: "Noto Sans CJK SC", sans-serif;
  font-size: 18px;
  text-anchor: middle;
  .axis { font-size: 14px; }
`;

const ViewTools = styled.div`
  position: absolute;
  top: 0;
  right: 0;
  display: flex;
  flex-direction: column;
  align-items: center;
  width: 33px;
  padding: 8px 1px 9px 0;
  border-radius: 0 0 3px 3px;
  background: #fff;
  button {
    display: grid;
    place-items: center;
    height: 29px;
  }
  hr {
    width: 23px;
    margin: 2px 0;
    border: 0;
    border-top: 1px solid #555;
  }
`;

const ViewCaret = styled.div`
  display: grid;
  place-items: center;
  height: 10px;
`;

const Editor = styled.section`
  display: flex;
  flex: 330;
  flex-direction: column;
  min-height: 0;
  border-left: 1px solid #d6d6d6;
  border-right: 1px solid #d6d6d6;
`;

const EditorTitle = styled.h2`
  flex: none;
  height: 23px;
  margin: 0;
  padding: 2px 8px;
  border-bottom: 1px solid #dadada;
  background: #f0f0f0;
  color: #666;
  font-size: 12px;
  font-weight: 400;
`;

const EditorTools = styled.div`
  display: flex;
  flex: none;
  align-items: center;
  gap: 12px;
  height: 27px;
  padding: 1px 0 0 5px;
  border-bottom: 1px solid #dadada;
  white-space: nowrap;
  ${MiniButton}:nth-last-child(2) { gap: 6px; }
`;

const Steps = styled.div`
  display: flex;
  gap: 15px;
`;

const StepButton = styled.button`
  width: 16px;
  height: 16px;
`;

const EditorBody = styled.div`
  flex: 1;
  min-height: 0;
  overflow: hidden;
  background: linear-gradient(90deg, #f0f0f0 7px, #fff 7px);
`;

const RebarTable = styled.table`
  ${gridTable}
  background: #fff;
  th div {
    max-height: 20px;
    line-height: 17px;
    white-space: normal;
    display: flex;
    align-items: center;
    justify-content: center;
    height: 20px;
    overflow: hidden;
  }
`;

const DataRow = styled.tr`
  background: #c1dfe0;
  color: #000;
  && td {
    height: 46px;
    border-right-color: #d9d9d9;
    line-height: 14px;
    white-space: normal;
    word-break: break-all;
    font-size: 10px;
    font-family: "DejaVu Sans Mono", "Noto Sans CJK SC", monospace;
  }
  && td:nth-child(2) {
    border: solid #777;
    border-width: 0 2px 2px 0;
  }
  && td:nth-child(-n + 2), && td:nth-child(n + 12) {
    font: 12px/14px "Open Sans", "Noto Sans CJK SC", sans-serif;
  }
`;

const EdgePanel = styled.aside`
  flex: none;
  width: 6px;
  border: solid #cfcfcf;
  border-width: 0 1px 0 1px;
  background: #f4f4f4;
`;

const Marks = styled.svg`
  position: absolute;
  left: 0;
  top: 0;
  width: 1624px;
  height: 948px;
  fill: #fb2414;
  pointer-events: none;
`;

export default App;
